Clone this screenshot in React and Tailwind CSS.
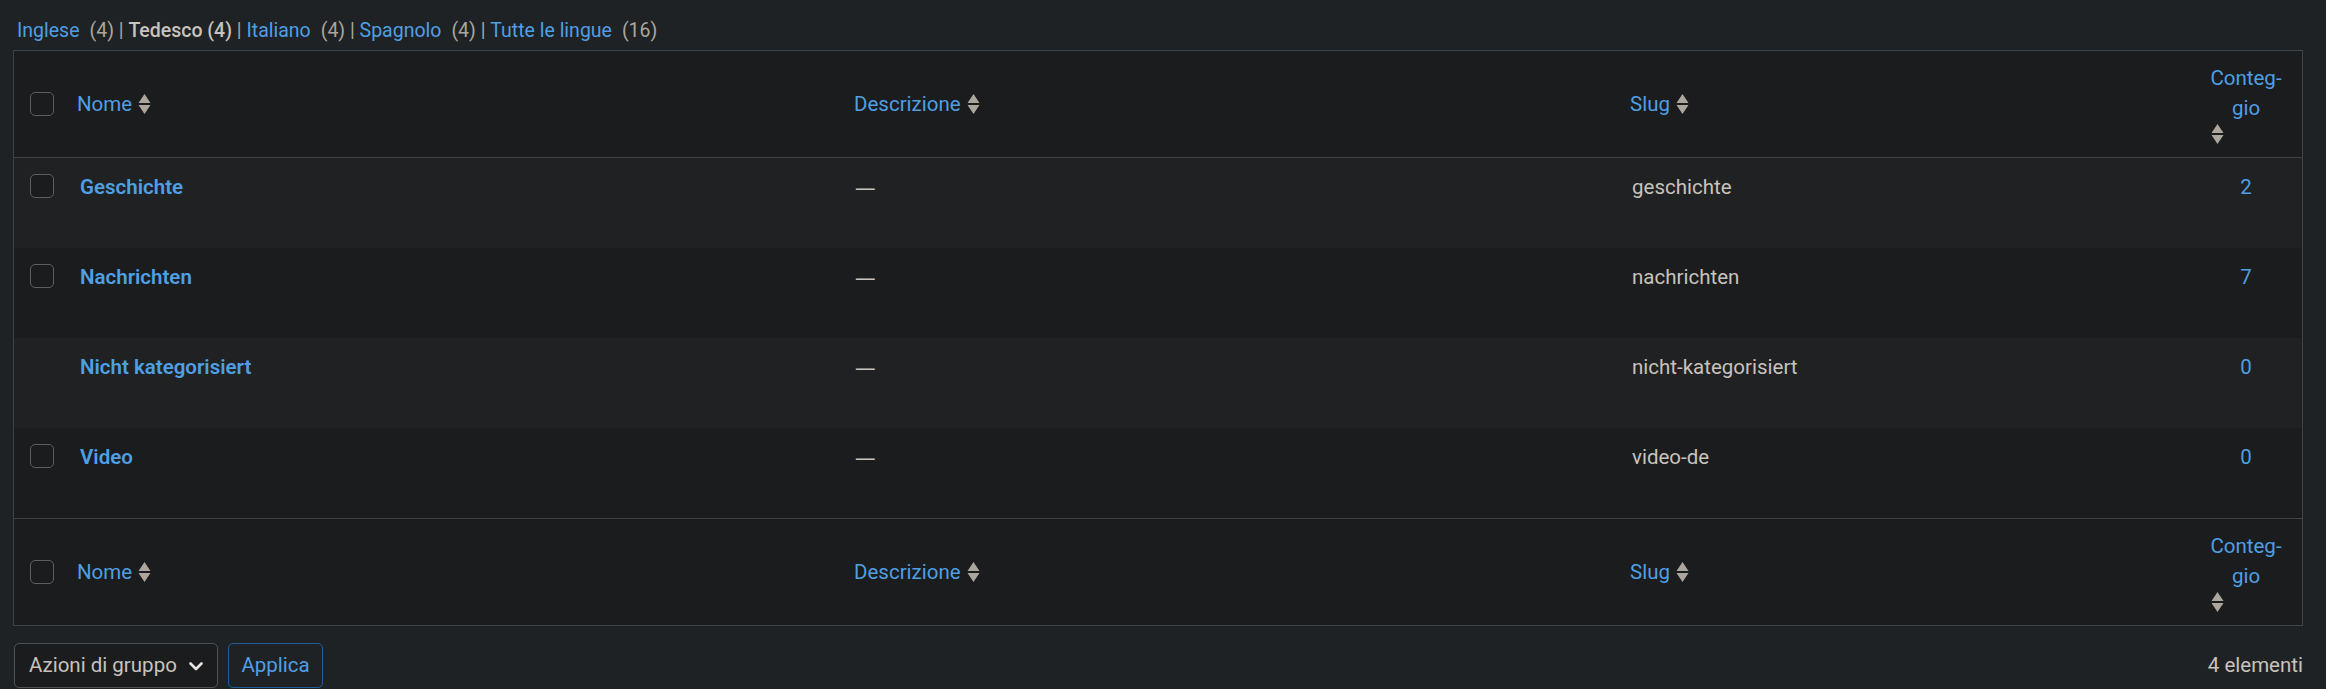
import React from 'react';

const SortArrows = ({ className = '' }) => (
  <svg className={className} width="13" height="22" viewBox="0 0 13 22" fill="#aca69d">
    <path d="M6.5 1 L12.5 10 L0.5 10 Z" />
    <path d="M0.5 12 L12.5 12 L6.5 21 Z" />
  </svg>
);

const Checkbox = () => (
  <div className="w-[24px] h-[24px] rounded-[5px] border border-[#5a5f63] bg-[#1b1c1e]" />
);

const rows = [
  { name: 'Geschichte', slug: 'geschichte', count: 2, check: true },
  { name: 'Nachrichten', slug: 'nachrichten', count: 7, check: true },
  { name: 'Nicht kategorisiert', slug: 'nicht-kategorisiert', count: 0, check: false },
  { name: 'Video', slug: 'video-de', count: 0, check: true },
];

const cols = 'grid grid-cols-[54px_775px_777px_570px_1fr]';

const HeaderRow = ({ border }) => (
  <div className={`${cols} h-[107px] bg-[#1b1c1e] ${border}`}>
    <div className="flex items-center pl-[16px]">
      <Checkbox />
    </div>
    <div className="flex items-center pl-[9px] text-[#4f9fe3]">
      Nome <SortArrows className="ml-[6px]" />
    </div>
    <div className="flex items-center pl-[11px] text-[#4f9fe3]">
      Descrizione <SortArrows className="ml-[6px]" />
    </div>
    <div className="flex items-center pl-[10px] text-[#4f9fe3]">
      Slug <SortArrows className="ml-[6px]" />
    </div>
    <div className="flex flex-col items-center justify-center text-[#4f9fe3] leading-[30px]">
      <div className="w-[80px] text-center">
        Conteg-
        <br />
        gio
      </div>
      <div className="w-[80px] pl-[5px]">
        <SortArrows />
      </div>
    </div>
  </div>
);

export default function App() {
  return (
    <div
      className="w-full h-[689px] bg-[#1f2224] pl-[13px] pr-[23px] pt-[16px] text-[20.5px] text-[#c8c3bc] overflow-hidden"
      style={{ fontFamily: '"Segoe UI", Roboto, sans-serif' }}
    >
      {/* language filters */}
      <div className="flex items-center h-[30px] leading-[30px] pl-[4px] whitespace-pre text-[19.5px]">
        <span className="text-[#4f9fe3]">Inglese</span>
        <span className="text-[#aca69d] ml-[10px]">(4) | </span>
        <span className="font-medium text-[#c8c3bc]">Tedesco (4)</span>
        <span className="text-[#aca69d]"> | </span>
        <span className="text-[#4f9fe3]">Italiano</span>
        <span className="text-[#aca69d] ml-[10px]">(4) | </span>
        <span className="text-[#4f9fe3]">Spagnolo</span>
        <span className="text-[#aca69d] ml-[10px]">(4) | </span>
        <span className="text-[#4f9fe3]">Tutte le lingue</span>
        <span className="text-[#aca69d] ml-[10px]">(16)</span>
      </div>

      {/* table */}
      <div className="mt-[4px] border border-[#3e4347]">
        <HeaderRow border="border-b border-[#3e4347]" />
        {rows.map((r, i) => (
          <div
            key={r.slug}
            className={`${cols} h-[90px] ${i % 2 === 0 ? 'bg-[#1f2123]' : 'bg-[#1b1c1e]'}`}
          >
            <div className="pl-[16px] pt-[16px]">{r.check && <Checkbox />}</div>
            <div className="pl-[12px] pt-[14px] leading-[30px] font-semibold text-[#4f9fe3]">{r.name}</div>
            <div className="pl-[12px] pt-[14px] leading-[30px]" style={{ fontFamily: '"Noto Sans", sans-serif' }}>
              —
            </div>
            <div className="pl-[12px] pt-[14px] leading-[30px]">{r.slug}</div>
            <div className="pt-[14px] leading-[30px] text-center text-[#4f9fe3]">{r.count}</div>
          </div>
        ))}
        <HeaderRow border="border-t border-[#3e4347]" />
      </div>

      {/* bottom actions */}
      <div className="flex items-center justify-between mt-[17px]">
        <div className="flex items-center gap-[10px] pl-[1px]">
          <div className="flex items-center justify-between w-[204px] h-[45px] pl-[14px] pr-[12px] rounded-[5px] border border-[#4d5256] bg-[#1b1c1e] text-[#c8c3bc]">
            <span>Azioni di gruppo</span>
            <svg width="18" height="18" viewBox="0 0 18 18" fill="none" stroke="#e8e6e3" strokeWidth="2.6" strokeLinecap="round" strokeLinejoin="round">
              <path d="M3.5 6.5 L9 12 L14.5 6.5" />
            </svg>
          </div>
          <div className="flex items-center justify-center w-[95px] h-[45px] rounded-[5px] border border-[#1f5f99] text-[#4f9fe3]">
            Applica
          </div>
        </div>
        <div className="text-[#c8c3bc]">4 elementi</div>
      </div>
    </div>
  );
}
